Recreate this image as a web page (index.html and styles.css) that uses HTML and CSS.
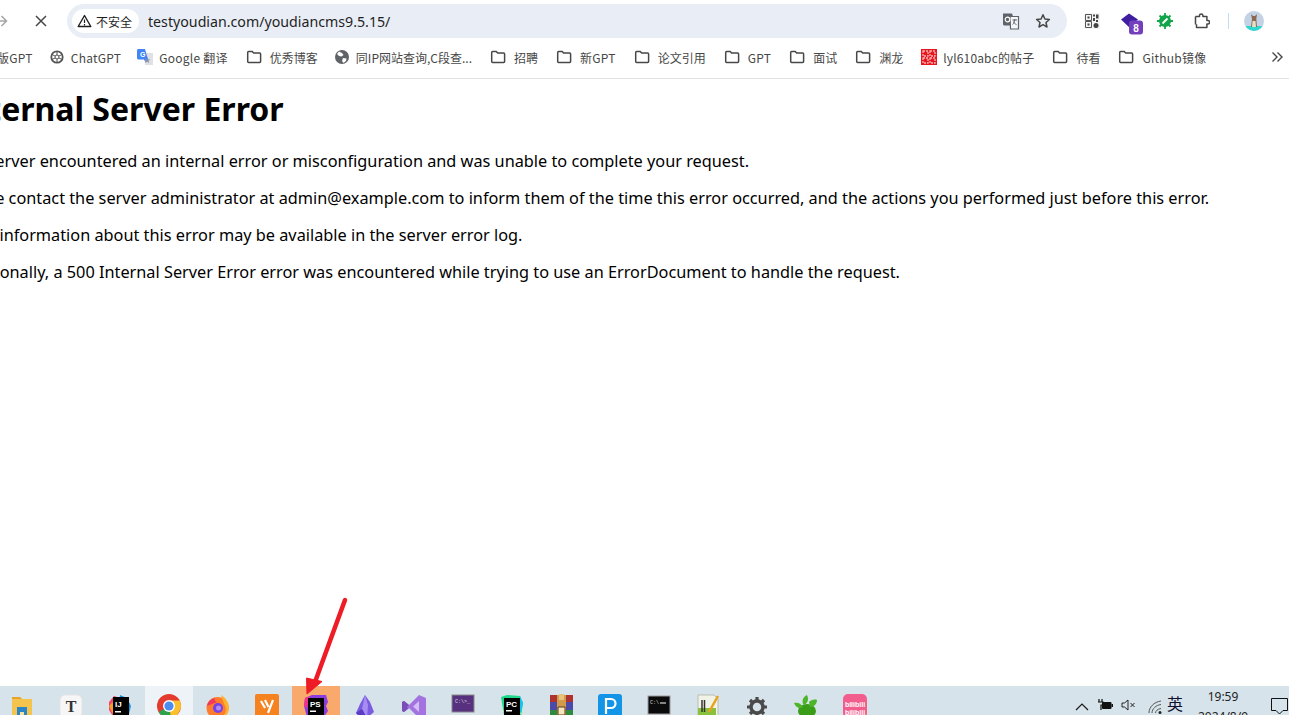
FILE: index.html
```html
<!DOCTYPE html>
<html lang="zh-CN">
<head>
<meta charset="utf-8">
<title>500 Internal Server Error</title>
<link rel="stylesheet" href="styles.css">
</head>
<body>
<svg class="defs" width="0" height="0" aria-hidden="true">
  <defs>
    <symbol id="folder" viewBox="0 0 16 16"><path d="M1.7 3.4c0-.5.4-.9.9-.9h3.6l1.5 1.600h6c.5 0 .9.4.9.9v7.6c0 .5-.4.9-.9.9H2.600c-.5 0-.9-.4-.9-.9z" fill="none" stroke="#474747" stroke-width="1.500"/></symbol>
  </defs>
</svg>
<header class="toolbar">
  <div class="nav">
    <svg class="back" width="16" height="16" viewBox="0 0 16 16"><path d="M-4 8h14M5.500 3l5 5-5 5" fill="none" stroke="#a3a5a8" stroke-width="1.500"/></svg>
    <svg class="stop" width="12" height="12" viewBox="0 0 12 12"><path d="M1 1l10 10M11 1L1 11" fill="none" stroke="#474747" stroke-width="1.500"/></svg>
  </div>
  <div class="omnibox">
    <div class="chip">
      <svg width="15" height="14" viewBox="0 0 15 14"><path d="M7.500 1.500l6.300 11H1.200z" fill="none" stroke="#1f1f1f" stroke-width="1.400" stroke-linejoin="round"/><path d="M7.500 5.500v3.500M7.500 10v1.400" stroke="#1f1f1f" stroke-width="1.200"/></svg>
      <span>不安全</span>
    </div>
    <span class="url">testyoudian.com/youdiancms9.5.15/</span>
    <svg class="translate" width="18" height="18" viewBox="0 0 18 18"><path d="M1 1.500h9l1 3v9H2.500A1.500 1.500 0 0 1 1 12z" fill="#5f6368"/><path d="M8 4.500h8.500v12.500H8.500z" fill="#f4f6fa" stroke="#5f6368" stroke-width="1.200"/><circle cx="5.500" cy="7.500" r="2.300" fill="none" stroke="#fff" stroke-width="1.200"/><path d="M10.500 8h4.500M12.700 7v1c0 2-1 3.500-2 4.500M11.500 9.500c.5 1.500 1.500 2.500 3 3" fill="none" stroke="#5f6368"/></svg>
    <svg class="star" width="16" height="16" viewBox="0 0 16 16"><path d="M8 1.800l1.900 4.200 4.500.5-3.400 3 1 4.500L8 11.700 4 14l1-4.500-3.400-3 4.500-.5z" fill="none" stroke="#474747" stroke-width="1.500" stroke-linejoin="round"/></svg>
  </div>
  <div class="extensions">
    <svg class="ext-qr" width="16" height="16" viewBox="0 0 16 16"><rect width="16" height="16" rx="1" fill="#f4f4f4"/><path d="M1.500 1.500h6v6h-6zM1.500 8.500h6v6h-6z" fill="none" stroke="#555"/><path d="M3.500 3.500h2v2h-2zM3.500 10.500h2v2h-2zM9 1.500h2v2H9zM12 1.500h2.500v4H12zM9 5h2v3H9zM12 7h2v2h-2z" fill="#444"/><circle cx="12" cy="12.500" r="2.500" fill="#444"/></svg>
    <svg class="ext-badge" width="24" height="24" viewBox="0 0 24 24"><path d="M1 8.500L9 2.500l9 6-3 2.500 3 2-7 5z" fill="#3f1f9f"/><rect x="9" y="9.500" width="14" height="14" rx="3" fill="#7340bd"/><text x="16" y="20.500" class="ext-num">8</text></svg>
    <svg class="ext-bug" width="16" height="16" viewBox="0 0 16 16"><circle cx="8" cy="8" r="6" fill="#12a54a"/><path d="M8 0v16M0 8h16M2.500 2.500l11 11M13.500 2.500l-11 11" stroke="#12a54a" stroke-width="1.800"/><path d="M5.500 10.500l5-5" stroke="#fff" stroke-width="1.800"/></svg>
    <svg class="ext-puzzle" width="16" height="16" viewBox="0 0 16 16"><path d="M1.500 3.500h4V2.600a1.700 1.700 0 0 1 3.400 0v.9h4v4h1a1.700 1.700 0 0 1 0 3.400h-1v3.600H2.500v-3.300" fill="none" stroke="#474747" stroke-width="1.500" stroke-linejoin="round"/><path d="M1.500 3.500v8" stroke="#474747" stroke-width="1.500"/></svg>
    <span class="divider"></span>
    <svg class="avatar" width="20" height="20" viewBox="0 0 20 20"><defs><clipPath id="av"><circle cx="10" cy="10" r="10"/></clipPath></defs><g clip-path="url(#av)"><rect width="20" height="20" fill="#c3d2e4"/><rect y="15" width="20" height="5" fill="#2fd8cf"/><path d="M7 3l2 2h2l2-2-.7 5 .7 8H7l1-8z" fill="#8a6a4e"/><path d="M8.500 10h3l.5 6H8z" fill="#e8dccb"/></g></svg>
  </div>
</header>
<nav class="bookmarks">
  <div class="bm-list">
    <a class="bm bm-first bm-latin"><span>版GPT</span></a>
    <a class="bm bm-chat bm-latin">
      <svg viewBox="0 0 16 16"><circle cx="8" cy="8" r="5.700" fill="none" stroke="#555" stroke-width="1.800"/><path d="M8 2.500v11M3 5.500l10 5M13 5.500L3 10.500" stroke="#555" stroke-width="1"/><circle cx="8" cy="8" r="2" fill="#fff" stroke="#555"/></svg>
      <span>ChatGPT</span>
    </a>
    <a class="bm bm-narrow bm-latin">
      <svg viewBox="0 0 16 16"><path d="M7 4h9v12H8z" fill="#dfe1e5"/><path d="M10.200 8l.9 2.300 2.300.1-1.800 1.400.6 2.200-2-1.300-2 1.300.6-2.200-1.800-1.400 2.300-.1z" fill="#8d96a3"/><path d="M0 1.500C0 .7.700 0 1.500 0H8l3 10.500H1.500C.7 10.500 0 9.800 0 9z" fill="#4285f4"/><path d="M8 10.500l1 3-2-3z" fill="#2a56c6"/><text x="3" y="8" class="g-letter">G</text></svg>
      <span>Google 翻译</span>
    </a>
    <a class="bm"><svg><use href="#folder"/></svg><span>优秀博客</span></a>
    <a class="bm bm-narrow bm-globe">
      <svg viewBox="0 0 16 16"><circle cx="8" cy="8" r="7" fill="#5f6368"/><path d="M5 2.500l3 1.500 1.500 2-2 1.500L5 7 3 5zM9 9l3.500.5L12 12l-2.500 2L8 12z" fill="#fff"/></svg>
      <span>同IP网站查询,C段查...</span>
    </a>
    <a class="bm"><svg><use href="#folder"/></svg><span>招聘</span></a>
    <a class="bm bm-latin"><svg><use href="#folder"/></svg><span>新GPT</span></a>
    <a class="bm"><svg><use href="#folder"/></svg><span>论文引用</span></a>
    <a class="bm bm-latin"><svg><use href="#folder"/></svg><span>GPT</span></a>
    <a class="bm"><svg><use href="#folder"/></svg><span>面试</span></a>
    <a class="bm"><svg><use href="#folder"/></svg><span>渊龙</span></a>
    <a class="bm bm-narrow bm-red">
      <svg viewBox="0 0 16 16"><rect width="16" height="16" fill="#e8161d"/><path d="M2 2h5v5H2zM9 2h5v5H9zM2 9h5v5H2zM9 9h5v5H9z" fill="none" stroke="#f6b4b4" stroke-width="1.300" stroke-dasharray="2 1"/></svg>
      <span>lyl610abc的帖子</span>
    </a>
    <a class="bm"><svg><use href="#folder"/></svg><span>待看</span></a>
    <a class="bm bm-latin"><svg><use href="#folder"/></svg><span>Github镜像</span></a>
  </div>
  <svg class="more" width="12" height="12" viewBox="0 0 12 12"><path d="M1.500 1.500L6 6l-4.500 4.500M6.500 1.500L11 6l-4.500 4.500" fill="none" stroke="#474747" stroke-width="1.400"/></svg>
</nav>
<main class="page">
  <h1>Internal Server Error</h1>
  <p>The server encountered an internal error or misconfiguration and was unable to complete your request.</p>
  <p>Please contact the server administrator at admin@example.com to inform them of the time this error occurred, and the actions you performed just before this error.</p>
  <p>More information about this error may be available in the server error log.</p>
  <p>Additionally, a 500 Internal Server Error error was encountered while trying to use an ErrorDocument to handle the request.</p>
</main>
<footer class="taskbar">
  <div class="apps">
    <div class="cell"><svg viewBox="0 0 24 24"><path d="M2 3h8l2 2h10v19H2z" fill="#f4c44f"/><path d="M2 3h8l2 2H2z" fill="#e3a52c"/><path d="M7 13h10v11H7z" fill="#2a86c8"/><path d="M10 18h4v6h-4z" fill="#f4e2a4"/></svg></div>
    <div class="cell"><svg viewBox="0 0 24 24"><rect x="1" y="1" width="22" height="23" rx="5" fill="#f6f6f6" stroke="#e4e4e4"/><text x="12" y="18" class="t-letter">T</text></svg></div>
    <div class="cell"><svg viewBox="0 0 24 24"><path d="M1 8l5-6 6 2-6 20L1 16z" fill="#f5476a"/><path d="M12 1l7 3 4 8-3 12H10z" fill="#1296e8"/><path d="M1 12l4-4v12z" fill="#fa9b2d"/><rect x="5" y="3" width="16" height="19" fill="#000"/><text x="7" y="13" class="j-letter">IJ</text><rect x="7" y="17" width="6" height="1.500" fill="#fff"/></svg></div>
    <div class="cell cell-active"><svg viewBox="0 0 24 24"><circle cx="12" cy="12" r="12" fill="#e33b2e"/><path d="M12 12L1.600 18A12 12 0 0 0 14.500 23.700z" fill="#2ca24c"/><path d="M12 12h11.700A12 12 0 0 1 14 23.800z" fill="#fbc02d"/><path d="M12 6.500h10.800A12 12 0 0 1 23.500 15L17 12z" fill="#fbc02d"/><circle cx="12" cy="12" r="6" fill="#fff"/><circle cx="12" cy="12" r="4.600" fill="#4a8cf0"/></svg></div>
    <div class="cell"><svg viewBox="0 0 24 24"><circle cx="11.500" cy="14" r="11" fill="#ff7a2b"/><path d="M15 1c5 3 8 8 8 13 0 6-5 10-10 10 6-2 9-8 5-14z" fill="#ffb02e"/><path d="M1 12c1-5 4-7 8-8-1 2 0 3 2 4z" fill="#ee3a5c"/><circle cx="12" cy="14" r="5" fill="#7542e5"/><circle cx="12.500" cy="14" r="2.500" fill="#b18cf0"/></svg></div>
    <div class="cell"><svg viewBox="0 0 24 24"><rect width="24" height="24" rx="2" fill="#f5811f"/><path d="M6 7l4 7M10 6l3.500 7M18 6l-5 13" fill="none" stroke="#fff" stroke-width="2.200"/></svg></div>
    <div class="cell cell-hot"><svg viewBox="0 0 24 24"><path d="M1 4l7-3h14l2 7-2 4 2 5-4 6H3L0 12z" fill="#8a3ee0"/><path d="M1 4l5-2-3 12-3-2z" fill="#f0308c"/><rect x="4" y="4" width="16" height="17" fill="#000"/><text x="6" y="13" class="j-letter">PS</text><rect x="6" y="16.500" width="6" height="1.500" fill="#fff"/></svg></div>
    <div class="cell"><svg viewBox="0 0 24 24"><path d="M12 1l5 7 4 10-7 6H8l-5-5 4-9z" fill="#7b5ce0"/><path d="M12 1l-3 14 5 9 1-13z" fill="#a78df2"/><path d="M3 19l6-4 5 9H8z" fill="#5a3dc4"/></svg></div>
    <div class="cell"><svg viewBox="0 0 24 24"><path d="M17 1l7 3v17l-7 3L7 14l-5 4-2-1V8l2-1 5 4z" fill="#a373e0"/><path d="M17 7v11l-6-5.500z" fill="#d5bdf5"/><path d="M0 8l2-1 5 4-2.500 2.500L7 14l-5 4-2-1z" fill="#7a4db8"/></svg></div>
    <div class="cell"><svg viewBox="0 0 24 24"><rect x="1" y="1" width="22" height="17" fill="#57307f" stroke="#888"/><text x="4" y="9" class="con-text">C:\&gt;_</text></svg></div>
    <div class="cell"><svg viewBox="0 0 24 24"><path d="M1 3l6-2 13 1 3 7-2 13-9 2-8-3z" fill="#21d789"/><path d="M20 2l3 7-2 10-4-6z" fill="#12c4ee"/><path d="M3 17l6 7h8l4-5-9-4z" fill="#fcf84a"/><rect x="4" y="4" width="16" height="17" fill="#000"/><text x="6" y="12.500" class="j-letter">PC</text><rect x="6" y="16" width="6" height="1.500" fill="#fff"/></svg></div>
    <div class="cell"><svg viewBox="0 0 24 24"><rect x="1" y="1" width="23" height="7" fill="#b0322f"/><rect x="1" y="8" width="23" height="8" fill="#4b4aa8"/><rect x="1" y="16" width="23" height="8" fill="#2e8a3c"/><path d="M8 1h9v23H8z" fill="#d29b4c"/><path d="M10 0h5v6h-5z" fill="#e6c27a"/><path d="M9 13h7v8H9z" fill="#f6e4be" stroke="#5c3a12"/></svg></div>
    <div class="cell"><svg viewBox="0 0 24 24"><rect width="24" height="24" rx="3" fill="#1295e6"/><path d="M8 20V5h5a4.500 4.500 0 0 1 0 9H8" fill="none" stroke="#fff" stroke-width="2.200"/></svg></div>
    <div class="cell"><svg viewBox="0 0 24 24"><rect x="1" y="2" width="22" height="18" fill="#0b0b0b" stroke="#9a9a9a"/><text x="3" y="10" class="con-text">C:\</text><path d="M13 9h6" stroke="#fff"/></svg></div>
    <div class="cell"><svg viewBox="0 0 24 24"><path d="M2 1h16l4 4v19H2z" fill="#f1f3e6" stroke="#b9bdb4"/><path d="M2 14h18v10H2z" fill="#88c23c"/><path d="M6 6v12M8.500 6v12" stroke="#333" stroke-width="1.500"/><path d="M13 18L22 2" stroke="#e8a21c" stroke-width="2.500"/></svg></div>
    <div class="cell"><svg viewBox="0 0 24 24"><circle cx="12" cy="13" r="6" fill="none" stroke="#4a4a4a" stroke-width="3.500"/><path d="M12 3v4M12 19v4M2 13h4M18 13h4M5 6l3 3M16 17l3 3M19 6l-3 3M8 17l-3 3" stroke="#4a4a4a" stroke-width="3.200"/></svg></div>
    <div class="cell"><svg viewBox="0 0 24 24"><ellipse cx="13" cy="17" rx="9" ry="7" fill="#3a9d18"/><path d="M0 9c3-1 7 0 9 4-3 2-7 1-9-4zM9 10c-1-4 0-7 4-9 2 4 1 7-2 10zM15 8c2-2 5-3 8-2 0 4-3 7-7 7z" fill="#4eb52a"/></svg></div>
    <div class="cell"><svg viewBox="0 0 24 24"><rect width="24" height="24" rx="5" fill="#f25d8e"/><text x="12" y="13" class="bili">bilibili</text><text x="12" y="21" class="bili">bilibili</text></svg></div>
  </div>
  <div class="tray">
    <svg class="tray-up" width="14" height="8" viewBox="0 0 14 8"><path d="M1 7l6-6 6 6" fill="none" stroke="#1a1a1a" stroke-width="1.200"/></svg>
    <svg class="tray-batt" width="16" height="12" viewBox="0 0 16 12"><path d="M2 0v3M5 0v3M1 3h5v3H4v5" fill="none" stroke="#111" stroke-width="1.200"/><rect x="5" y="3" width="9.500" height="7" rx="1" fill="#111"/><rect x="14.500" y="5" width="1.500" height="3" fill="#111"/></svg>
    <svg class="tray-vol" width="15" height="12" viewBox="0 0 15 12"><path d="M1 4h2.500L7 1v10L3.500 8H1z" fill="none" stroke="#222"/><path d="M9.500 4l4 4M13.500 4l-4 4" stroke="#222"/></svg>
    <svg class="tray-wifi" width="15" height="14" viewBox="0 0 15 14"><path d="M1 13C1 7 6 2 13 1M4 13c0-4 4-8 9-8.500M7.500 13c0-2 2-4 5.500-4.500" fill="none" stroke="#555"/><circle cx="12" cy="12.500" r="1.500" fill="#222"/></svg>
    <span class="ime">英</span>
    <div class="clock"><span>19:59</span><span>2024/8/9</span></div>
    <svg class="tray-note" width="17" height="17" viewBox="0 0 17 17"><path d="M.5.500h16v12h-4.500l-3.500 3.500-3.500-3.500H.5z" fill="none" stroke="#111"/></svg>
  </div>
</footer>
<svg class="pointer" width="50" height="100" viewBox="0 0 50 100"><path d="M43 3L13 85" stroke="#ee1c25" stroke-width="4.500" stroke-linecap="round" fill="none"/><path d="M4.500 81l15.500 3.500L5 97z" fill="#ee1c25" stroke="#ee1c25" stroke-linejoin="round"/></svg>
</body>
</html>
```
FILE: styles.css
```css
* { box-sizing: border-box; }
html, body { height: 100%; margin: 0; }
body {
  position: relative;
  display: flex;
  flex-direction: column;
  height: 715px;
  overflow: hidden;
  background: #fff;
  color: #000;
  font-family: "Noto Sans CJK SC", "Noto Sans", sans-serif;
}
.defs { position: absolute; }

.toolbar {
  display: flex;
  align-items: center;
  flex: none;
  height: 40px;
  padding-top: 2px;
  background: #fff;
}
.nav {
  display: flex;
  align-items: center;
  width: 67px;
  flex: none;
}
.back { margin-left: -4px; }
.stop { margin-left: 23px; }
.omnibox {
  display: flex;
  align-items: center;
  width: 1000px;
  height: 34px;
  padding: 0 16px 0 5px;
  border-radius: 17px;
  background: #e9eef6;
}
.chip {
  display: flex;
  align-items: center;
  gap: 4px;
  width: 67px;
  height: 24px;
  padding-left: 5px;
  border-radius: 12px;
  background: #fff;
  font-size: 12px;
  color: #1f1f1f;
}
.url {
  margin-left: 9px;
  font-family: "Noto Sans", sans-serif;
  font-size: 14.2px;
  color: #1f1f1f;
}
.translate { margin-left: auto; }
.star { margin-left: 15px; }
.extensions {
  display: flex;
  align-items: center;
  flex: 1;
  height: 24px;
}
.ext-qr { margin-left: 17px; }
.ext-badge { margin-left: 20px; margin-top: 4px; }
.ext-bug { margin-left: 13px; }
.ext-puzzle { margin-left: 21px; }
.divider { width: 1px; height: 16px; margin-left: 18px; background: #c6dcf2; }
.avatar { margin-left: 15px; }
.ext-num { font: 700 10px "Liberation Sans", sans-serif; fill: #fff; text-anchor: middle; }

.bookmarks {
  display: flex;
  align-items: center;
  justify-content: space-between;
  flex: none;
  height: 39px;
  padding-right: 6px;
  padding-bottom: 4px;
  border-bottom: 1px solid #e3e3e3;
  background: #fff;
}
.bm-list {
  display: flex;
  align-items: center;
  gap: 18px;
  margin-left: -3px;
  font-size: 12px;
  color: #474747;
  white-space: nowrap;
}
.bm { display: flex; align-items: center; gap: 8px; }
.bm svg { width: 16px; height: 16px; flex: none; }
.bm-latin { letter-spacing: .25px; }
.bm-first { margin-right: -2px; }
.bm-chat { gap: 6px; margin-right: -2px; }
.bm-narrow { gap: 6px; }
.bm-globe { margin-left: -2px; }
.bm-red { letter-spacing: .15px; }
.g-letter { font: 700 7px "Liberation Sans", sans-serif; fill: #fff; }

.page { flex: 1; min-height: 0; margin-left: -45px; padding-top: 6px; }
h1 {
  margin: 0 0 19px -1px;
  font-family: "Noto Sans", sans-serif;
  font-size: 32px;
  line-height: 47px;
  font-weight: 700;
  white-space: nowrap;
}
p {
  margin: 0 0 16px;
  font-family: "Noto Sans", sans-serif;
  font-size: 16.3px;
  line-height: 21px;
  white-space: nowrap;
}

.taskbar {
  display: flex;
  justify-content: space-between;
  flex: none;
  height: 29px;
  overflow: hidden;
  background: #d6e3ea;
}
.apps { display: flex; gap: 1px; margin-left: -2px; }
.cell { width: 48px; height: 29px; padding-top: 8px; }
.cell svg { display: block; width: 24px; height: 24px; margin: 0 auto; }
.cell-active { background: #edf3f7; }
.cell-hot { background: #f9a96c; }
.t-letter { font: 700 16px "Liberation Serif", serif; fill: #333; text-anchor: middle; }
.j-letter { font: 700 8px "Liberation Sans", sans-serif; fill: #fff; }
.con-text { font: 5px "Liberation Mono", monospace; fill: #ddd; }
.bili { font: 700 7px "Liberation Sans", sans-serif; fill: #fff; text-anchor: middle; }

.tray { display: flex; align-items: flex-start; flex: none; padding-right: 1px; }
.tray-up { margin-top: 17px; }
.tray-batt { margin: 13px 0 0 8px; }
.tray-vol { margin: 13px 0 0 8px; }
.tray-wifi { margin: 14px 0 0 12px; }
.ime { margin: 6px 0 0 4px; font-size: 16px; line-height: 22px; color: #101030; }
.clock {
  display: flex;
  flex-direction: column;
  align-items: center;
  width: 68px;
  margin: 1px 0 0 6px;
  font-family: "Noto Sans", sans-serif;
  font-size: 12px;
  line-height: 20px;
  color: #222;
}
.tray-note { margin: 12px 0 0 14px; }

.pointer { position: absolute; left: 302px; top: 597px; }
```
